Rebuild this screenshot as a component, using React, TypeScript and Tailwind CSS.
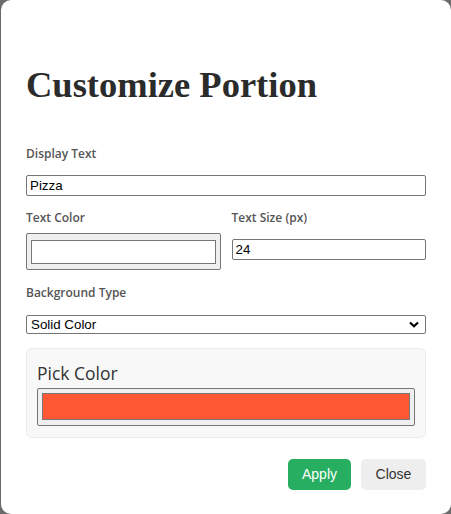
import React from "react"

const sans = { fontFamily: '"Open Sans", "Noto Sans", sans-serif' }

function FieldLabel({ children }: { children: React.ReactNode }) {
  return (
    <label className="block h-4 text-[12px] leading-4 font-semibold text-[#555] [font-family:'Open_Sans',sans-serif]">
      {children}
    </label>
  )
}

function ColorSwatch({ color, className }: { color: string; className?: string }) {
  return (
    <div className={`rounded-[2px] border border-[#767676] bg-[#efefef] ${className ?? ""}`}>
      <div className="h-full w-full border border-[#777]" style={{ backgroundColor: color }} />
    </div>
  )
}

export default function App() {
  return (
    <div className="flex h-[514px] w-[451px] overflow-hidden bg-[#6b6b6b] pl-px">
      <div className="h-[514px] w-[450px] rounded-[10px] bg-white px-[25px] pt-[65px]">
        <h2 className="h-10 text-[36.5px] leading-10 font-bold text-[#2b2b2b] [font-family:'Liberation_Serif',serif]">
          Customize Portion
        </h2>

        <div className="mt-[41px]">
          <FieldLabel>Display Text</FieldLabel>
          <input
            readOnly
            value="Pizza"
            className="mt-[13px] block h-[21px] w-full rounded-[2px] border border-[#767676] px-[3px] text-[13.33px] text-black [font-family:'Liberation_Sans',Arial,sans-serif]"
          />
        </div>

        <div className="mt-[14px] grid grid-cols-2 gap-x-[11px]">
          <div>
            <FieldLabel>Text Color</FieldLabel>
            <ColorSwatch color="#ffffff" className="mt-[7px] h-[37px] w-full px-[4px] pt-[6px] pb-[5px]" />
          </div>
          <div>
            <FieldLabel>Text Size (px)</FieldLabel>
            <input
              readOnly
              value="24"
              className="mt-[13px] block h-[21px] w-full rounded-[2px] border border-[#767676] px-[3px] text-[13.33px] text-black [font-family:'Liberation_Sans',Arial,sans-serif]"
            />
          </div>
        </div>

        <div className="mt-[15px]">
          <FieldLabel>Background Type</FieldLabel>
          <div className="mt-[14px] flex h-[19px] w-full items-center justify-between rounded-[2px] border border-[#767676] pr-[4px] pl-[4px] text-[13.33px] text-black [font-family:'Liberation_Sans',Arial,sans-serif]">
            <span>Solid Color</span>
            <svg width="10" height="7" viewBox="0 0 10 7" className="mr-[2px]">
              <path d="M1 1.5 L5 5.2 L9 1.5" fill="none" stroke="#000" strokeWidth="2.2" />
            </svg>
          </div>
        </div>

        <div className="mt-[14px] rounded-[6px] border border-[#ececec] bg-[#f8f8f8] px-[10px] pt-[12px] pb-[11px]">
          <div className="h-6 text-[17.5px] leading-6 text-[#333]" style={sans}>
            Pick Color
          </div>
          <ColorSwatch color="#ff5733" className="mt-[3px] h-[38px] w-full px-[4px] pt-[4px] pb-[5px]" />
        </div>

        <div className="mt-[21px] flex justify-end gap-[10px] text-[14px] [font-family:'Liberation_Sans',Arial,sans-serif]">
          <button className="h-[31px] w-[63px] rounded-[5px] bg-[#27ae60] text-white">Apply</button>
          <button className="h-[31px] w-[65px] rounded-[5px] bg-[#eeeeee] text-[#333]">Close</button>
        </div>
      </div>
    </div>
  )
}
